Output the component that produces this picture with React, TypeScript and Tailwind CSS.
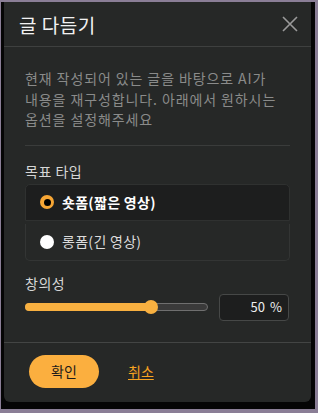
import { useState } from "react";

const options = [
  { id: "short", label: "숏폼(짧은 영상)" },
  { id: "long", label: "롱폼(긴 영상)" },
];

export default function App() {
  const [selected, setSelected] = useState("short");
  const [value, setValue] = useState(50);

  return (
    <div className="h-[413px] w-[318px] bg-[#8a7e96] pl-[1px] pt-[2px] font-['Noto_Sans_CJK_KR',sans-serif]">
      <div className="h-[407px] w-[314px] bg-[#050505] pb-[7px] pl-[3px] pr-[4px]">
        <div className="flex h-[400px] w-[307px] flex-col rounded-b-[6px] bg-[#262827]">
          {/* 헤더 */}
          <div className="flex h-[45px] shrink-0 items-center justify-between border-b border-[#3e403f] pl-[15px] pr-[13px]">
            <h1 className="text-[19px] leading-none tracking-[0.5px] text-[#f2f2f2]">글 다듬기</h1>
            <button className="text-[#9a9a9a]">
              <svg width="16" height="16" viewBox="0 0 16 16" fill="none" stroke="currentColor" strokeWidth="1.6">
                <path d="M1 1L15 15M15 1L1 15" />
              </svg>
            </button>
          </div>

          {/* 본문 */}
          <div className="flex-1 px-[21px] pt-[21px]">
            <p className="text-[14px] leading-[20.5px] tracking-[0.9px] text-[#8a8b8a]">
              현재 작성되어 있는 글을 바탕으로 AI가
              <br />
              내용을 재구성합니다. 아래에서 원하시는
              <br />
              옵션을 설정해주세요
            </p>
            <hr className="mt-[15px] border-[#3a3c3b]" />

            <div className="mt-[15px] text-[14px] leading-[20px] tracking-[0.5px] text-[#d6d6d6]">목표 타입</div>
            <div className="mt-[3px]">
              {options.map((o, i) => {
                const on = selected === o.id;
                return (
                  <div
                    key={o.id}
                    onClick={() => setSelected(o.id)}
                    className={`flex h-[37px] items-center gap-[8px] pl-[14px] ${
                      i === 0
                        ? "rounded-t-[5px] border border-[#2f3130] bg-[#1d1e1e]"
                        : "mt-[3px] h-[36px] rounded-b-[5px] border border-t-0 border-[#333534]"
                    }`}
                  >
                    {on ? (
                      <span className="flex h-[14px] w-[14px] items-center justify-center rounded-full bg-[#f6a635]">
                        <span className="h-[7px] w-[7px] rounded-full bg-black" />
                      </span>
                    ) : (
                      <span className="h-[14px] w-[14px] rounded-full bg-white" />
                    )}
                    <span className={`text-[14px] tracking-[0.3px] ${on ? "font-bold text-white" : "text-[#dcdcdc]"}`}>{o.label}</span>
                  </div>
                );
              })}
            </div>

            <div className="mt-[12px] text-[14px] leading-[20px] tracking-[0.5px] text-[#d6d6d6]">창의성</div>
            <div className="mt-[1px] flex items-center gap-[11px]">
              <div className="relative h-[27px] w-[183px] shrink-0">
                <div className="absolute left-0 right-0 top-[9px] h-[8px] rounded-full border border-[#6f6f6f] bg-[#3a3a3a]" />
                <div
                  className="absolute left-0 top-[9px] h-[8px] rounded-full bg-[#f8b040]"
                  style={{ width: `${(value / 100) * 250}px` }}
                />
                <div className="absolute top-[6px] h-[14px] w-[14px] rounded-full bg-[#f8b040]" style={{ left: 119 }} />
              </div>
              <div className="flex h-[27px] w-[70px] items-center justify-end rounded-[4px] border border-[#464847] bg-[#1d1e1e] pr-[6px] text-[13px] text-[#eeeeee]">
                <input
                  value={value}
                  onChange={(e) => setValue(Number(e.target.value) || 0)}
                  className="w-[30px] bg-transparent text-right outline-none"
                />
                <span className="ml-[5px]">%</span>
              </div>
            </div>
          </div>

          {/* 하단 */}
          <div className="flex h-[60px] shrink-0 items-center gap-[29px] border-t border-[#434544] pl-[25px] pb-[2px]">
            <button className="h-[33px] w-[70px] rounded-full bg-[#fbaf3f] text-[14px] text-[#1a1a1a]">확인</button>
            <button className="text-[14px] text-[#f6a321] underline underline-offset-2">취소</button>
          </div>
        </div>
      </div>
    </div>
  );
}
